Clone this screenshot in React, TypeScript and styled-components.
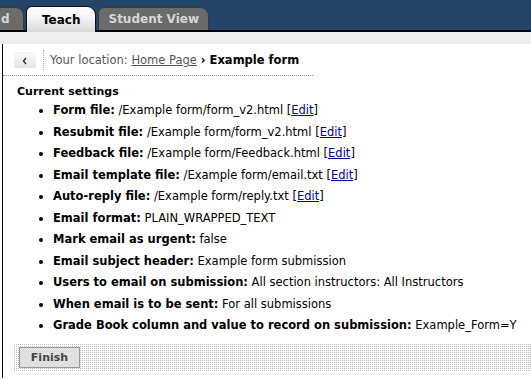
import styled, { createGlobalStyle } from 'styled-components'

const GlobalStyle = createGlobalStyle`
  html, body {
    margin: 0;
    padding: 0;
    background: #ffffff;
  }
  body {
    font-family: "DejaVu Sans", Verdana, sans-serif;
    font-size: 11px;
    color: #000;
    overflow: hidden;
  }
`

const settings = [
  { label: 'Form file:', value: '/Example form/form_v2.html', edit: true },
  { label: 'Resubmit file:', value: '/Example form/form_v2.html', edit: true },
  { label: 'Feedback file:', value: '/Example form/Feedback.html', edit: true },
  { label: 'Email template file:', value: '/Example form/email.txt', edit: true },
  { label: 'Auto-reply file:', value: '/Example form/reply.txt', edit: true },
  { label: 'Email format:', value: 'PLAIN_WRAPPED_TEXT' },
  { label: 'Mark email as urgent:', value: 'false' },
  { label: 'Email subject header:', value: 'Example form submission' },
  { label: 'Users to email on submission:', value: 'All section instructors: All Instructors' },
  { label: 'When email is to be sent:', value: 'For all submissions' },
  { label: 'Grade Book column and value to record on submission:', value: 'Example_Form=Y' },
]

function App() {
  return (
    <Page>
      <GlobalStyle />
      <Header>
        <Tab $variant="off" $cut>d</Tab>
        <Tab $variant="on">Teach</Tab>
        <Tab $variant="off">Student View</Tab>
      </Header>
      <SubBar />
      <Content>
        <Breadcrumb>
          <BackButton>
            <svg width="6" height="8" viewBox="0 0 6 8">
              <path d="M4 1 L1.5 4 L4 7" stroke="#333" strokeWidth="1.4" fill="none" />
            </svg>
          </BackButton>
          <Separator />
          <Location>
            Your location: <Crumb href="#">Home Page</Crumb>
            <Arrow>›</Arrow>
            <Current>Example form</Current>
          </Location>
        </Breadcrumb>
        <SectionTitle>Current settings</SectionTitle>
        <SettingsList>
          {settings.map((s) => (
            <Item key={s.label}>
              <Label>{s.label}</Label> {s.value}
              {s.edit && (
                <>
                  {' '}[<EditLink href="#">Edit</EditLink>]
                </>
              )}
            </Item>
          ))}
        </SettingsList>
        <ButtonBar>
          <FinishButton>Finish</FinishButton>
        </ButtonBar>
      </Content>
    </Page>
  )
}

export default App

const Page = styled.div`
  width: 531px;
  height: 380px;
  display: flex;
  flex-direction: column;
`

const Header = styled.div`
  height: 30px;
  background: #23456a;
  border-bottom: 2px solid #000;
  display: flex;
  align-items: flex-end;
  gap: 2px;
`

const Tab = styled.div<{ $variant: 'on' | 'off'; $cut?: boolean }>`
  height: 23px;
  box-sizing: border-box;
  padding: 0 ${(p) => (p.$cut ? '0' : p.$variant === 'on' ? '15px' : '9px')};
  margin-left: ${(p) => (p.$cut ? '-1px' : '0')};
  width: ${(p) => (p.$cut ? '25px' : 'auto')};
  display: flex;
  align-items: center;
  font-family: "DejaVu Sans", Verdana, sans-serif;
  font-weight: bold;
  font-size: 12px;
  border: 1px solid ${(p) => (p.$variant === 'on' ? '#111' : '#3a3a3a')};
  border-bottom: none;
  border-radius: ${(p) => (p.$cut ? '0 8px 0 0' : '6px 9px 0 0')};
  background: ${(p) =>
    p.$variant === 'on'
      ? 'linear-gradient(#ffffff 0%, #f4f4f4 45%, #d8d8d8 100%)'
      : '#6b6b6b'};
  color: ${(p) => (p.$variant === 'on' ? '#000' : '#d6d6d6')};
  ${(p) => (p.$variant === 'on' ? 'height: 26px; margin-bottom: -2px;' : '')}
  ${(p) => (p.$cut ? 'padding-left: 1px;' : '')}
`

const SubBar = styled.div`
  height: 12px;
  background: #eeeeee;
`

const Content = styled.div`
  flex: 1;
  margin-left: 2px;
  border-left: 1px solid #000;
  margin-bottom: 2px;
  display: flex;
  flex-direction: column;
`

const Breadcrumb = styled.div`
  display: flex;
  align-items: center;
  width: 299px;
  padding: 6px 0 5px 11px;
  border-bottom: 1px dotted #999;
`

const BackButton = styled.div`
  width: 22px;
  height: 15px;
  background: linear-gradient(#fafafa, #e4e4e4);
  border-top: 1px solid #f4f4f4;
  display: flex;
  align-items: center;
  justify-content: center;
`

const Separator = styled.div`
  width: 0;
  height: 20px;
  border-left: 1px dotted #aaa;
  margin: 0 6px 0 7px;
`

const Location = styled.div`
  color: #555;
  font-size: 11.5px;
  white-space: nowrap;
`

const Crumb = styled.a`
  color: #555;
  text-decoration: underline;
`

const Arrow = styled.span`
  color: #000;
  font-weight: bold;
  margin: 0 4px;
`

const Current = styled.span`
  color: #000;
  font-weight: bold;
`

const SectionTitle = styled.div`
  font-weight: bold;
  margin: 9px 0 0 14px;
  line-height: 14px;
`

const SettingsList = styled.ul`
  margin: 1px 0 0;
  padding: 0 0 0 50px;
  list-style: disc;
  font-size: 11.5px;
`

const Item = styled.li`
  line-height: 21.5px;
  white-space: nowrap;
`

const Label = styled.span`
  font-weight: bold;
`

const EditLink = styled.a`
  color: #0000a0;
  text-decoration: underline;
`

const ButtonBar = styled.div`
  margin: 7px 0 0 10px;
  height: 28px;
  padding: 3px 6px;
  box-sizing: border-box;
  background: conic-gradient(#bdbdbd 25%, transparent 0) 0 0 / 2px 2px;
  display: flex;
  align-items: center;
`

const FinishButton = styled.button`
  width: 61px;
  height: 21px;
  background: #e0e0e0;
  border: 1px solid #9a9a9a;
  color: #444;
  font-family: "DejaVu Sans", Verdana, sans-serif;
  font-weight: bold;
  font-size: 11px;
  padding: 0;
`
